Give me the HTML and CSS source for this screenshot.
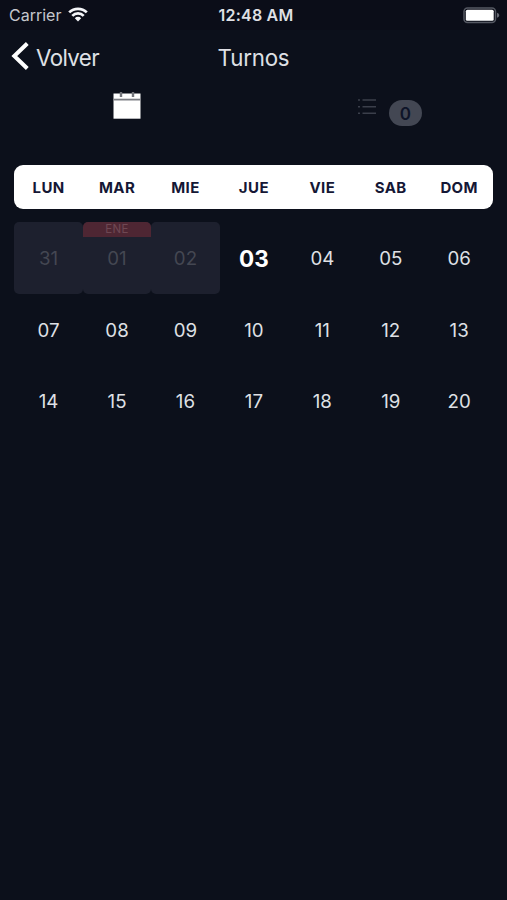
FILE: index.html
```html
<!DOCTYPE html>
<html lang="es">
<head>
<meta charset="utf-8">
<title>Turnos</title>
<link rel="stylesheet" href="styles.css">
</head>
<body>
<div class="status">
  <div class="carrier"><span class="carrier-name">Carrier</span>
    <svg class="wifi" width="20" height="15" viewBox="0 0 20 15" fill="none" stroke="#f4f5f8" stroke-width="2.7"><path d="M1.2 5.4a12.5 12.5 0 0 1 17.6 0M4.3 8.9a7.9 7.9 0 0 1 11.4 0"/><path d="M6.8 11.2a4.5 4.5 0 0 1 6.4 0L10 14.6z" fill="#f4f5f8" stroke="none"/></svg>
  </div>
  <span class="time">12:48 AM</span>
  <svg class="battery" width="37" height="17" viewBox="0 0 37 17"><rect x="1" y="1" width="31.5" height="14.5" rx="3.5" fill="none" stroke="#555862" stroke-width="1.5"/><rect x="2.8" y="2.8" width="27.9" height="10.9" rx="1.5" fill="#fff"/><path d="M34 5.8c3 .7 3 4.3 0 5z" fill="#666973"/></svg>
</div>
<header class="nav">
  <div class="back"><svg width="20" height="30" viewBox="0 0 20 30" fill="none" stroke="#fff" stroke-width="4"><path d="M17.3 2.5L4.3 15l13 12.5"/></svg><span>Volver</span></div>
  <h1>Turnos</h1>
</header>
<nav class="tabs">
  <div class="tab"><svg class="calendar" width="30" height="30" viewBox="0 0 30 30"><path d="M1.5 3.5h27v25.2h-27z" fill="#fff"/><path d="M1.5 9.6h27" stroke="#7c7e84" stroke-width="1.8"/><path d="M9 2v5M21 2v5" stroke="#73757b" stroke-width="2.4"/></svg></div>
  <div class="tab"><svg class="list" width="20" height="18" viewBox="0 0 20 18" stroke="#3b3f4b" stroke-width="1.6"><path d="M1 2h2M5.5 2H19M1 8.7h2M5.5 8.7H19M1 15.3h2M5.5 15.3H19"/></svg><span class="badge">0</span></div>
</nav>
<main>
  <div class="weekdays"><span>LUN</span><span>MAR</span><span>MIE</span><span>JUE</span><span>VIE</span><span>SAB</span><span>DOM</span></div>
  <div class="days">
    <div class="day past">31</div><div class="day past"><span class="month">ENE</span>01</div><div class="day past">02</div><div class="day today">03</div><div class="day">04</div><div class="day">05</div><div class="day">06</div>
    <div class="day">07</div><div class="day">08</div><div class="day">09</div><div class="day">10</div><div class="day">11</div><div class="day">12</div><div class="day">13</div>
    <div class="day">14</div><div class="day">15</div><div class="day">16</div><div class="day">17</div><div class="day">18</div><div class="day">19</div><div class="day">20</div>
  </div>
</main>
</body>
</html>
```
FILE: styles.css
```css
* { box-sizing: border-box; }
body {
  margin: 0;
  min-height: 900px;
  background: #0c101b;
  color: #dfe0e5;
  font-family: Inter, "Liberation Sans", sans-serif;
}
.status {
  display: grid;
  grid-template-columns: 1fr auto 1fr;
  align-items: center;
  height: 30px;
  padding: 0 7px 0 9px;
  background: #0b0d18;
}
.carrier { display: flex; align-items: center; gap: 7px; font-size: 16px; color: #c5c7cd; }
.wifi { margin-top: -2px; }
.time { font-size: 16px; font-weight: 600; letter-spacing: .2px; margin-left: 3px; }
.battery { justify-self: end; }
.nav {
  display: grid;
  grid-template-columns: 1fr auto 1fr;
  align-items: center;
  height: 52px;
}
.back { display: flex; align-items: center; gap: 6px; padding-left: 10px; font-size: 22.3px; letter-spacing: -.6px; }
.back span, h1 { padding-top: 2px; }
h1 { margin: 0; font-size: 22.3px; font-weight: 400; letter-spacing: -.2px; }
.tabs { display: grid; grid-template-columns: 1fr 1fr; height: 83px; padding-top: 8px; }
.tab { display: flex; justify-content: center; align-items: flex-start; }
.list { margin: 8px 12px 0 18px; }
.badge {
  width: 33px;
  height: 26px;
  margin-top: 10px;
  border-radius: 13px;
  background: #434753;
  color: #0e1428;
  font-size: 17px;
  font-weight: 600;
  line-height: 28px;
  text-align: center;
}
main { padding: 0 13.6px 0 14.4px; }
.weekdays {
  display: grid;
  grid-template-columns: repeat(7, 1fr);
  height: 44px;
  border-radius: 9px;
  background: #fff;
  color: #151735;
  font-size: 15px;
  font-weight: 650;
  line-height: 45px;
  letter-spacing: .4px;
  text-align: center;
}
.days { display: grid; grid-template-columns: repeat(7, 1fr); grid-auto-rows: 71.8px; margin-top: 13px; }
.day {
  position: relative;
  display: flex;
  align-items: center;
  justify-content: center;
  overflow: hidden;
  border-radius: 5px;
  font-size: 18.7px;
  padding-top: 1px;
}
.past { background: #1d202e; color: #444752; }
.today { color: #fff; font-size: 22.5px; font-weight: 700; }
.month {
  position: absolute;
  top: 0;
  left: 0;
  right: 0;
  height: 15px;
  background: #4e2633;
  color: #6e4853;
  font-size: 11.5px;
  line-height: 15px;
  letter-spacing: .3px;
  text-align: center;
}
```
